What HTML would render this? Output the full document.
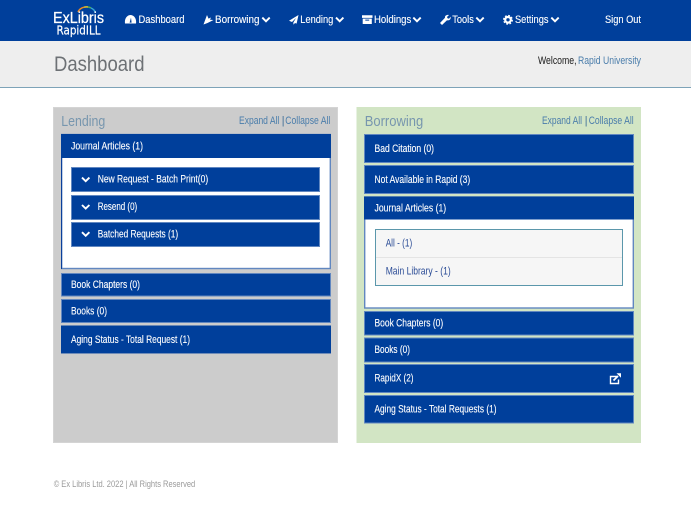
<!DOCTYPE html>
<html lang="en">
<head>
<meta charset="utf-8">
<title>Dashboard</title>
<style>
html,body{margin:0;padding:0;background:#fff;width:691px;height:511px;overflow:hidden}
svg{display:block;position:absolute;left:0;top:0}
text{font-family:"Liberation Sans",sans-serif;font-size:10.6px;white-space:pre}
.w text,text.w{fill:#fff;stroke:#fff;stroke-width:.12px}
.bar{fill:#003f9b;stroke:#6187c0;stroke-width:1}
.l{fill:#4a7dab}
.h{fill:#7796ae;font-size:15px}
</style>
</head>
<body>
<svg width="691" height="511" viewBox="0 0 691 511" xmlns="http://www.w3.org/2000/svg">
<!-- nav -->
<rect x="0" y="0" width="691" height="41" fill="#003f9b"/>
<rect x="0" y="41" width="691" height="46" fill="#eeeeee"/>
<rect x="0" y="87" width="691" height="1" fill="#7da3b8"/>

<!-- logo -->
<g fill="none" stroke-width="1.5">
<path d="M78 12 A9 8 0 0 1 84 7.2" stroke="#f08a24"/>
<path d="M84 7.2 A9 8 0 0 1 88 7" stroke="#e8c52a"/>
<path d="M88 7 A9 8 0 0 1 91 8" stroke="#4fb05a"/>
<path d="M91 8 A9 8 0 0 1 95.5 12.5" stroke="#35a6d8"/>
</g>
<text class="w" x="53" y="23" style="font-size:16px;stroke-width:.25px" textLength="51" lengthAdjust="spacingAndGlyphs">ExLibris</text>
<text class="w" x="56.5" y="34.3" style="font-size:12px;font-family:'DejaVu Sans',sans-serif;stroke-width:.2px" textLength="44" lengthAdjust="spacingAndGlyphs">RapidILL</text>

<!-- nav icons -->
<g fill="#fff">
<path fill-rule="evenodd" d="M125 23.5 C124.3 18 127.5 15 130.5 15 C133.5 15 136.8 18 136 23.5 Z M129.6 22.6 h2 L131 17.6 Z"/>
<path d="M203.5 24.5 L207 15 L208.5 18.6 L211 17.5 L210 19.8 L213.5 20 L207.5 23 Z"/>
<path d="M298.5 15 L289 20.7 L292 22 L296 18 L293.3 22.6 L293.5 24.6 L295 23 L296.6 23.6 Z"/>
<path fill-rule="evenodd" d="M362 15.3 h10.5 v2.6 h-10.5 Z M362.7 18.6 h9.1 v5.4 h-9.1 Z M365.3 19.6 v1 h3.9 v-1 Z"/>
<path d="M440 23 L445 17.8 C444.6 15.8 446.5 14.6 449 15 L447 17 L447.5 18.3 L449 18.7 L450.6 16.8 C451.2 19.3 449.3 20.9 447 20.3 L442 25 Z"/>
</g>
<circle cx="508" cy="19.8" r="2.8" fill="none" stroke="#fff" stroke-width="2.2"/>
<circle cx="508" cy="19.8" r="4.3" fill="none" stroke="#fff" stroke-width="1.3" stroke-dasharray="1.8 1.58"/>
<g fill="none" stroke="#fff" stroke-width="1.9">
<path d="M262.3 17.6 L266 21.3 L269.7 17.6"/>
<path d="M336 17.6 L339.7 21.3 L343.4 17.6"/>
<path d="M413.3 17.6 L417 21.3 L420.7 17.6"/>
<path d="M476.3 17.6 L480 21.3 L483.7 17.6"/>
<path d="M551.3 17.6 L555 21.3 L558.7 17.6"/>
</g>

<!-- nav text -->
<g class="w">
<text x="138.5" y="23" textLength="46" lengthAdjust="spacingAndGlyphs">Dashboard</text>
<text x="215" y="23" textLength="44.5" lengthAdjust="spacingAndGlyphs">Borrowing</text>
<text x="300.3" y="23" textLength="33" lengthAdjust="spacingAndGlyphs">Lending</text>
<text x="374" y="23" textLength="37.3" lengthAdjust="spacingAndGlyphs">Holdings</text>
<text x="452.3" y="23" textLength="21.5" lengthAdjust="spacingAndGlyphs">Tools</text>
<text x="515" y="23" textLength="33.5" lengthAdjust="spacingAndGlyphs">Settings</text>
<text x="605" y="23" textLength="36" lengthAdjust="spacingAndGlyphs">Sign Out</text>
</g>

<!-- subheader -->
<text x="54" y="71" style="font-size:21px" fill="#6d7175" textLength="90.5" lengthAdjust="spacingAndGlyphs">Dashboard</text>
<text x="538" y="64" fill="#1a1a1a" textLength="38.5" lengthAdjust="spacingAndGlyphs">Welcome,</text>
<text x="578" y="64" class="l" textLength="63" lengthAdjust="spacingAndGlyphs">Rapid University</text>

<!-- Lending panel -->
<rect x="53.5" y="107.5" width="284" height="335" fill="#cccccc" stroke="#d4d4d4"/>
<text x="61.3" y="126" class="h" textLength="44" lengthAdjust="spacingAndGlyphs">Lending</text>
<text x="239" y="124" class="l" textLength="40.3" lengthAdjust="spacingAndGlyphs">Expand All</text>
<text x="281.8" y="124" fill="#3f6f98">|</text>
<text x="285.3" y="124" class="l" textLength="45" lengthAdjust="spacingAndGlyphs">Collapse All</text>

<rect x="61.7" y="134.5" width="268.6" height="134" fill="#fff" stroke="#6187c0" stroke-width="1.4"/>
<rect x="61" y="134" width="1" height="135" fill="#0a3f9b"/>
<rect x="61" y="134" width="270" height="24" fill="#003f9b"/>
<rect x="71.5" y="167.5" width="248" height="24" class="bar"/>
<rect x="71.5" y="195.5" width="248" height="24" class="bar"/>
<rect x="71.5" y="222.5" width="248" height="24" class="bar"/>
<g fill="none" stroke="#fff" stroke-width="1.9">
<path d="M82 177.6 L85.7 181.2 L89.4 177.6"/>
<path d="M82 205 L85.7 208.6 L89.4 205"/>
<path d="M82 232.2 L85.7 235.8 L89.4 232.2"/>
</g>
<rect x="61.5" y="273.5" width="269" height="22.5" class="bar"/>
<rect x="61.5" y="299.5" width="269" height="23" class="bar"/>
<rect x="61.5" y="326" width="269" height="27.5" class="bar" style="stroke:#003f9b"/>
<rect x="61" y="353" width="270" height="1" fill="#6f8cb8"/>
<g class="w">
<text x="71" y="149.3" textLength="72" lengthAdjust="spacingAndGlyphs">Journal Articles (1)</text>
<text x="97.7" y="182.3" textLength="110.5" lengthAdjust="spacingAndGlyphs">New Request - Batch Print(0)</text>
<text x="97.7" y="210" textLength="39.5" lengthAdjust="spacingAndGlyphs">Resend (0)</text>
<text x="97.7" y="237.3" textLength="80.5" lengthAdjust="spacingAndGlyphs">Batched Requests (1)</text>
<text x="71" y="288" textLength="69" lengthAdjust="spacingAndGlyphs">Book Chapters (0)</text>
<text x="71" y="314.5" textLength="36" lengthAdjust="spacingAndGlyphs">Books (0)</text>
<text x="71" y="343" textLength="119" lengthAdjust="spacingAndGlyphs">Aging Status - Total Request (1)</text>
</g>

<!-- Borrowing panel -->
<rect x="356.5" y="107" width="284.5" height="336" fill="#d2e5c4"/>
<text x="364.7" y="126" class="h" textLength="58.5" lengthAdjust="spacingAndGlyphs">Borrowing</text>
<text x="542" y="124" class="l" textLength="40" lengthAdjust="spacingAndGlyphs">Expand All</text>
<text x="584.8" y="124" fill="#3f6f98">|</text>
<text x="588.7" y="124" class="l" textLength="45" lengthAdjust="spacingAndGlyphs">Collapse All</text>

<rect x="364.5" y="134.5" width="269" height="28" class="bar"/>
<rect x="364.5" y="165.5" width="269" height="28" class="bar"/>
<rect x="364.7" y="197" width="268.6" height="111" fill="#fff" stroke="#6187c0" stroke-width="1.4"/>
<rect x="364" y="196.5" width="270" height="23" fill="#003f9b"/>
<rect x="375.5" y="229.5" width="247" height="56" fill="#f6f6f6" stroke="#5b97ab"/>
<rect x="376" y="257" width="246" height="1" fill="#e4e4e4"/>
<rect x="364.5" y="311.5" width="269" height="23.5" class="bar"/>
<rect x="364.5" y="338" width="269" height="24" class="bar"/>
<rect x="364.5" y="364.5" width="269" height="28" class="bar"/>
<rect x="364.5" y="395.5" width="269" height="27.5" class="bar"/>
<g class="w">
<text x="374.5" y="152" textLength="59.5" lengthAdjust="spacingAndGlyphs">Bad Citation (0)</text>
<text x="374.5" y="182.8" textLength="95.7" lengthAdjust="spacingAndGlyphs">Not Available in Rapid (3)</text>
<text x="374.5" y="211.5" textLength="71.7" lengthAdjust="spacingAndGlyphs">Journal Articles (1)</text>
<text x="374.5" y="326.5" textLength="68.7" lengthAdjust="spacingAndGlyphs">Book Chapters (0)</text>
<text x="374.5" y="353" textLength="35.5" lengthAdjust="spacingAndGlyphs">Books (0)</text>
<text x="374.5" y="381.5" textLength="39" lengthAdjust="spacingAndGlyphs">RapidX (2)</text>
<text x="374.5" y="412.5" textLength="122" lengthAdjust="spacingAndGlyphs">Aging Status - Total Requests (1)</text>
</g>
<text x="385.7" y="246.5" fill="#2b4c96" textLength="26.5" lengthAdjust="spacingAndGlyphs">All - (1)</text>
<text x="385.7" y="274.3" fill="#2b4c96" textLength="65" lengthAdjust="spacingAndGlyphs">Main Library - (1)</text>

<!-- external link icon -->
<path d="M617.5 376.5 H610.5 V383.5 H618.5 V379.5" fill="none" stroke="#fff" stroke-width="1.4"/>
<path d="M613.5 380.5 L618 376" fill="none" stroke="#fff" stroke-width="1.8"/>
<path d="M616.5 373.3 H621 V377.8 Z" fill="#fff"/>

<!-- footer -->
<text x="53.7" y="486.8" fill="#9a9a9a" style="font-size:9.6px" textLength="141.5" lengthAdjust="spacingAndGlyphs">© Ex Libris Ltd. 2022 | All Rights Reserved</text>
</svg>
</body>
</html>
